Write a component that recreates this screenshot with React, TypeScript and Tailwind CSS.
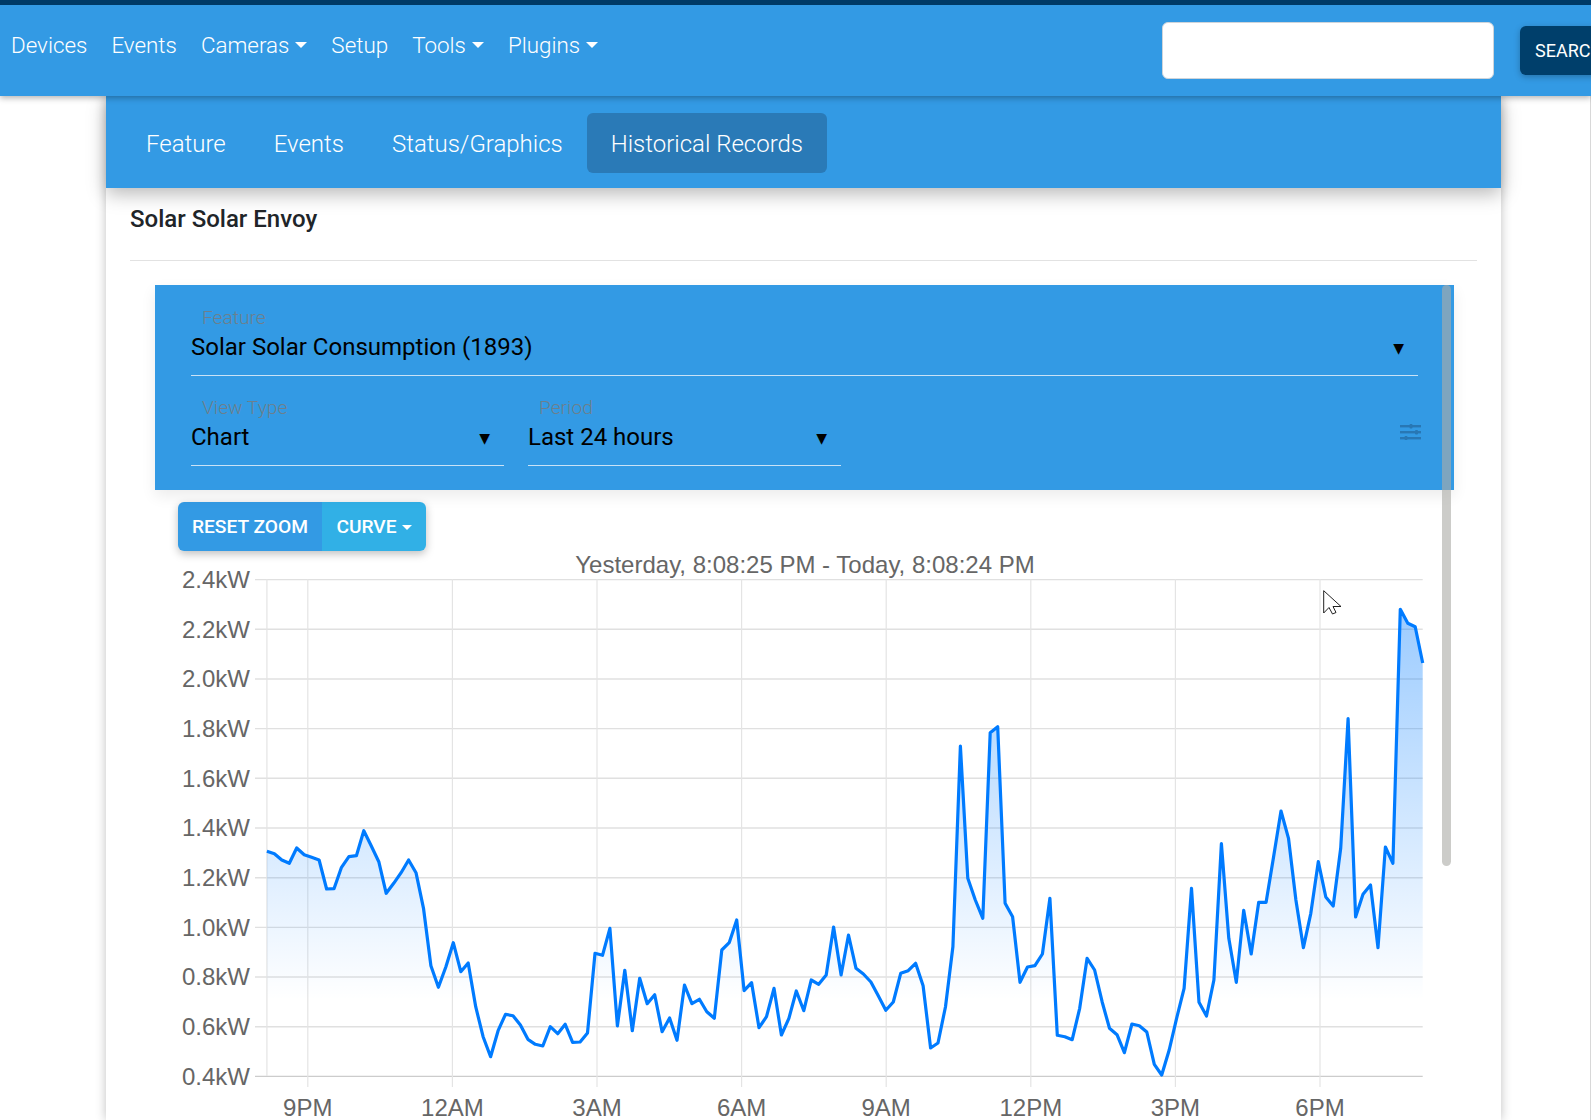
const navItems = [
  { label: "Devices" },
  { label: "Events" },
  { label: "Cameras", caret: true },
  { label: "Setup" },
  { label: "Tools", caret: true },
  { label: "Plugins", caret: true },
];

const tabs = ["Feature", "Events", "Status/Graphics", "Historical Records"];

// page y of each sample, taken every 7.457px from x=266.9
const samples = [
  851.3, 853.7, 860, 863.3, 848, 854.7, 857.3, 860, 889, 888.7, 867.3, 856.7, 855.7, 830.7, 846, 861.7, 893.3, 883.3,
  872.7, 860, 872.7, 908.3, 965.7, 987.3, 966.7, 942.7, 971.7, 963, 1006.7, 1036.7, 1056.7, 1030.7, 1014.3, 1015.7,
  1025, 1039.3, 1044.3, 1046, 1026.7, 1033.7, 1024.3, 1042.3, 1042, 1033, 953.3, 955.3, 928.3, 1026, 970.3, 1030.7,
  978.3, 1003.7, 994.7, 1031.7, 1018, 1040.3, 985, 1003.7, 999.3, 1011.7, 1018.3, 950, 942.7, 920, 990.7, 982.7,
  1027.7, 1016.7, 988.3, 1035, 1018.3, 991, 1010.7, 980, 984.3, 975, 927, 975, 935, 968.3, 974, 982, 996, 1010.3, 1002,
  973.3, 970.7, 963.3, 985.7, 1048, 1043, 1006.7, 946.7, 746, 878.3, 900, 918.3, 732.7, 726.7, 903.3, 916.7, 982.3,
  967, 965.7, 954, 898.3, 1035.3, 1036.7, 1039.7, 1008.3, 958.3, 970, 1001.7, 1028.3, 1034.7, 1052.7, 1024, 1025.7,
  1032, 1064.3, 1075, 1050, 1018.3, 988.3, 888.3, 1002.3, 1016, 980, 843.7, 938.3, 982.3, 910.3, 954, 902.3, 902.3,
  856.7, 811, 838.3, 900, 947.7, 913.3, 861.7, 897, 906, 848.3, 718.7, 917, 894.3, 885, 947.7, 847, 863.3, 609.3,
  623.3, 626.7, 663,
];

const left = 266.9;
const right = 1422.7;
const bottom = 1076;
const step = (right - left) / (samples.length - 1);
const linePoints = samples.map((y, i) => `${(left + i * step).toFixed(1)},${y}`).join(" ");
const areaPoints = `${left},${bottom} ${linePoints} ${right},${bottom}`;

const yTicks = ["2.4kW", "2.2kW", "2.0kW", "1.8kW", "1.6kW", "1.4kW", "1.2kW", "1.0kW", "0.8kW", "0.6kW", "0.4kW"];
const xTicks = ["9PM", "12AM", "3AM", "6AM", "9AM", "12PM", "3PM", "6PM"];

const Caret = () => (
  <span className="ml-[6px] inline-block border-x-[6px] border-t-[6px] border-x-transparent border-t-white" />
);

const Select = (props: { label: string; value: string; className: string }) => (
  <div className={`relative h-[65px] border-b border-[#c9e2f6] ${props.className}`}>
    <div className="-mt-[4px] pl-[11px] text-[19.2px] leading-[22px] font-light text-[#6d7f8c]">{props.label}</div>
    <div className="mt-[1px] text-[24px] leading-[34px] text-black">{props.value}</div>
    <span className="absolute right-[14px] top-[26.5px] font-['DejaVu_Sans'] text-[14px] leading-[20px] text-black">
      ▼
    </span>
  </div>
);

const Chart = () => (
  <svg
    viewBox="155 551 1300 569"
    width={1300}
    height={569}
    className="block font-['Liberation_Sans',sans-serif]"
  >
    <defs>
      <linearGradient id="area" gradientUnits="userSpaceOnUse" x1="0" y1="600" x2="0" y2="1000">
        <stop offset="0" stopColor="#007bff" stopOpacity="0.4" />
        <stop offset="1" stopColor="#007bff" stopOpacity="0" />
      </linearGradient>
    </defs>

    <text x="805" y="573" textAnchor="middle" fontSize="24" fill="#666">
      Yesterday, 8:08:25 PM - Today, 8:08:24 PM
    </text>

    {yTicks.map((label, i) => {
      const y = 579.6 + i * 49.68;
      return (
        <g key={label}>
          <line x1="255" x2={right} y1={y} y2={y} stroke={i === 10 ? "#ccc" : "#e0e0e0"} strokeWidth="1.4" />
          <text x="250" y={y + 8.4} textAnchor="end" fontSize="24" fill="#666">
            {label}
          </text>
        </g>
      );
    })}

    <line x1={left} x2={left} y1="579" y2="1076" stroke="#e4e4e4" strokeWidth="1.2" />
    {xTicks.map((label, i) => {
      const x = 307.8 + i * 144.6;
      return (
        <g key={label}>
          <line x1={x} x2={x} y1="579" y2="1087" stroke="#e4e4e4" strokeWidth="1.2" />
          <text x={x} y="1116" textAnchor="middle" fontSize="24" fill="#666">
            {label}
          </text>
        </g>
      );
    })}

    <polygon points={areaPoints} fill="url(#area)" />
    <polyline points={linePoints} fill="none" stroke="#007bff" strokeWidth="3.2" strokeLinejoin="round" />
  </svg>
);

export default function App() {
  return (
    <div className="relative h-[1120px] overflow-hidden bg-white font-['Roboto',sans-serif]">
      <nav className="relative z-20 flex h-[96px] border-t-[5px] border-[#003a66] bg-[#339ae4] shadow-[0_2px_6px_rgba(0,0,0,0.3)]">
        <ul className="flex w-[1162px] shrink-0 items-start gap-[24px] pl-[11px] pt-[22px] text-[22.4px] leading-[36px] font-light text-white">
          {navItems.map((item) => (
            <li key={item.label} className="flex items-center">
              {item.label}
              {item.caret && <Caret />}
            </li>
          ))}
        </ul>
        <input className="mt-[17px] h-[57px] w-[332px] shrink-0 rounded-[6px] border border-[#ced4da] bg-white" />
        <button className="ml-[26px] mt-[21px] h-[49px] w-[120px] shrink-0 rounded-[6px] bg-[#003f6b] pl-[15px] text-left text-[18px] text-white shadow-[0_2px_6px_rgba(0,0,0,0.25)]">
          SEARCH
        </button>
      </nav>

      <main className="mx-[106px] w-[1395px] shadow-[0_0_10px_rgba(0,0,0,0.25)]">
        <div className="relative z-10 flex h-[92px] items-center bg-[#339ae4] pl-[16px] pt-[2px] text-[24px] font-light text-white shadow-[0_6px_18px_rgba(0,0,0,0.28)]">
          {tabs.map((tab) => (
            <a
              key={tab}
              className={`flex h-[60px] items-center rounded-[6px] px-[24px] pt-[2px] ${
                tab === "Historical Records" ? "bg-[#2a7ab7]" : ""
              }`}
            >
              {tab}
            </a>
          ))}
        </div>

        <section className="h-[932px] bg-white px-[24px]">
          <h2 className="border-b border-[#e2e2e2] pt-[17px] pb-[27px] text-[24px] leading-[28px] font-medium text-[#212529]">
            Solar Solar Envoy
          </h2>

          <div className="-ml-[-25px] mt-[24px] w-[1299px]">
            <div className="relative flex h-[205px] flex-col gap-[25px] bg-[#339ae4] pl-[36px] pr-[36px] pt-[26px] shadow-[0_6px_14px_rgba(0,0,0,0.08)]">
              <Select label="Feature" value="Solar Solar Consumption (1893)" className="w-full" />
              <div className="flex gap-[24px]">
                <Select label="View Type" value="Chart" className="w-[313px]" />
                <Select label="Period" value="Last 24 hours" className="w-[313px]" />
              </div>
              <svg
                viewBox="0 0 21 16"
                width={21}
                height={16}
                className="absolute right-[33px] top-[139px] text-[#2877b4]"
                fill="currentColor"
              >
                <rect y="1" width="21" height="2.4" />
                <rect x="9.5" y="0" width="3" height="4.4" rx="1" />
                <rect y="7" width="21" height="2.4" />
                <rect x="15" y="6" width="3" height="4.4" rx="1" />
                <rect y="13" width="21" height="2.4" />
                <rect x="4.5" y="12" width="3" height="4" rx="1" />
              </svg>
            </div>

            <div className="ml-[23px] mt-[12px] inline-flex h-[49px] overflow-hidden rounded-[6px] text-[19.2px] font-medium text-white shadow-[0_3px_8px_rgba(0,0,0,0.25)]">
              <button className="w-[144px] bg-[#339ae4] pt-[1px] shadow-[2px_0_4px_rgba(0,0,0,0.15)]">RESET ZOOM</button>
              <button className="flex w-[104px] items-center justify-center bg-[#31b0e6] pt-[1px]">
                CURVE
                <span className="ml-[5px] inline-block border-x-[5px] border-t-[5px] border-x-transparent border-t-white" />
              </button>
            </div>

            <Chart />
          </div>
        </section>
      </main>

      {/* scrollbar thumb of the inner panel */}
      <div className="absolute left-[1442px] top-[285px] z-10 h-[581px] w-[9px] rounded-full bg-[rgba(172,172,168,0.62)]" />
      <div className="absolute right-0 top-[96px] h-[1024px] w-px bg-[#d8d8d8]" />

      {/* mouse pointer */}
      <svg viewBox="0 0 19 25" width={19} height={25} className="absolute left-[1322.5px] top-[589.5px] z-30">
        <path
          d="M0.7 0.7 L0.7 23 L6 17.5 L9.5 24 L13 22.5 L10 16.5 L18 16.5 Z"
          fill="#fff"
          stroke="#222"
          strokeWidth="1"
          strokeLinejoin="round"
        />
      </svg>
    </div>
  );
}
